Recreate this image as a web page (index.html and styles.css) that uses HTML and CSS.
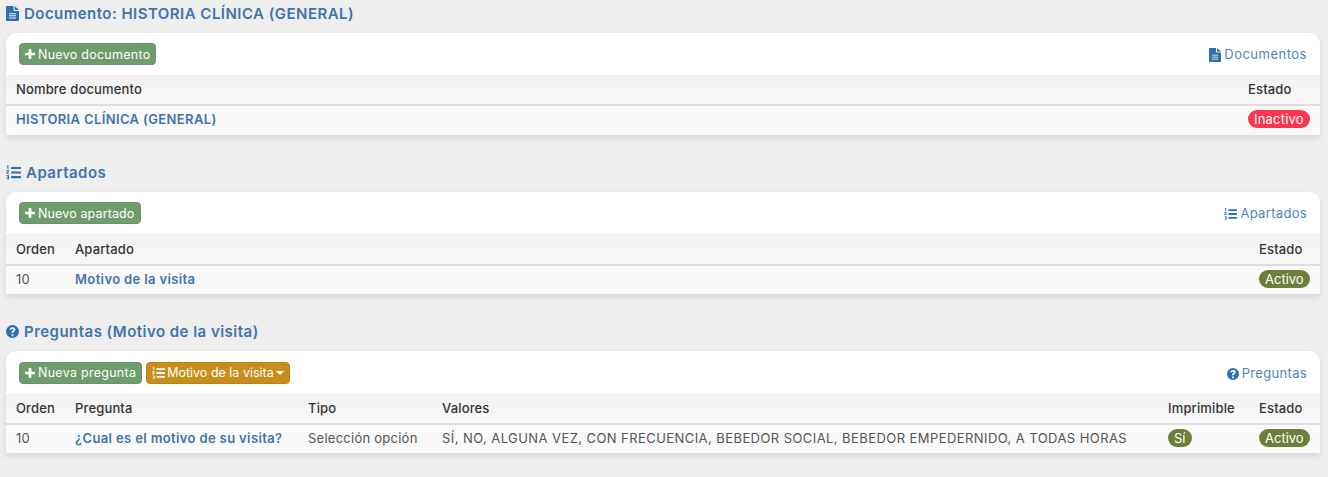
FILE: index.html
```html
<!DOCTYPE html>
<html lang="es">
<head>
  <meta charset="UTF-8">
  <meta name="viewport" content="width=device-width, initial-scale=1.0" />
  <title>Documento</title>
  <link rel="stylesheet" href="styles.css">
</head>
<body>
  <svg class="sprites" width="0" height="0">
    <symbol id="i-doc" viewBox="0 0 12 14" preserveAspectRatio="none">
      <path fill-rule="evenodd" d="M0 .8C0 .4.3 0 .8 0H7v3.800c0 .5.3.8.7.8H12v8.600c0 .4-.3.8-.8.8H.8c-.5 0-.8-.4-.8-.8zM2.800 6.700v.9h6.400v-.9zm0 2v.9h6.400v-.9zm0 2v.9h6.400v-.9z"/>
      <path d="M8 0l4 3.700H8z"/>
    </symbol>
    <symbol id="i-list" viewBox="0 0 16 15">
      <path d="M5.500 1.500H16v2.200H5.500zM5.500 6.400H16v2.200H5.500zM5.500 11.300H16v2.200H5.500z"/>
      <path d="M1 0h1.600v3.800H1.500V1H1zM.3 5.200h3v1L1.700 7.900h1.600v.9h-3v-.9L2 6.100H.3zM.3 10.500h3v4.300h-3v-.8h1.900v-.9H1v-.8h1.200v-.9H.3z"/>
    </symbol>
    <symbol id="i-help" viewBox="0 0 14 14">
      <path fill-rule="evenodd" d="M7 0a7 7 0 1 1 0 14A7 7 0 0 1 7 0zM6 10v2h2v-2zM7 2.400c-1.700 0-2.800.9-3.100 2.300l1.700.6c.2-.7.600-1.100 1.300-1.100.7 0 1.100.3 1.100.8 0 .5-.4.8-1 1.200-.8.5-1.200 1-1.200 1.900v.4h2v-.3c0-.4.2-.6.8-1 .9-.6 1.500-1.300 1.500-2.300 0-1.500-1.200-2.500-2.900-2.500z"/>
    </symbol>
    <symbol id="i-plus" viewBox="0 0 11 11">
      <path d="M4 .8C4 .4 4.300 0 4.700 0h1.600c.4 0 .7.400.7.800V4h3.200c.4 0 .8.300.8.700v1.600c0 .4-.4.700-.8.700H7v3.200c0 .4-.3.800-.7.800H4.700c-.4 0-.7-.4-.7-.8V7H.8C.4 7 0 6.700 0 6.300V4.700C0 4.300.4 4 .8 4H4z"/>
    </symbol>
  </svg>

  <section class="bloque">
    <h2 class="titulo"><svg class="ico ico-doc"><use href="#i-doc"/></svg>Documento: HISTORIA CLÍNICA (GENERAL)</h2>
    <div class="tarjeta">
      <div class="barra">
        <div class="acciones">
          <a class="btn btn-verde"><svg class="ico-plus"><use href="#i-plus"/></svg>Nuevo documento</a>
        </div>
        <a class="enlace"><svg class="ico ico-doc"><use href="#i-doc"/></svg>Documentos</a>
      </div>
      <table>
        <thead>
          <tr><th>Nombre documento</th><th class="col-estado-ancho">Estado</th></tr>
        </thead>
        <tbody>
          <tr>
            <td><a class="vinculo">HISTORIA CLÍNICA (GENERAL)</a></td>
            <td class="col-estado-ancho"><span class="pill pill-rojo">Inactivo</span></td>
          </tr>
        </tbody>
      </table>
    </div>
  </section>

  <section class="bloque">
    <h2 class="titulo"><svg class="ico ico-list"><use href="#i-list"/></svg>Apartados</h2>
    <div class="tarjeta">
      <div class="barra">
        <div class="acciones">
          <a class="btn btn-verde btn-justo"><svg class="ico-plus"><use href="#i-plus"/></svg>Nuevo apartado</a>
        </div>
        <a class="enlace enlace-justo"><svg class="ico ico-list"><use href="#i-list"/></svg>Apartados</a>
      </div>
      <table class="cabecera-alta">
        <thead>
          <tr><th class="col-orden">Orden</th><th>Apartado</th><th class="col-estado">Estado</th></tr>
        </thead>
        <tbody>
          <tr>
            <td class="col-orden">10</td>
            <td><a class="vinculo">Motivo de la visita</a></td>
            <td class="col-estado"><span class="pill pill-oliva">Activo</span></td>
          </tr>
        </tbody>
      </table>
    </div>
  </section>

  <section class="bloque">
    <h2 class="titulo"><svg class="ico ico-help"><use href="#i-help"/></svg>Preguntas (Motivo de la visita)</h2>
    <div class="tarjeta tarjeta-preguntas">
      <div class="barra">
        <div class="acciones">
          <a class="btn btn-verde"><svg class="ico-plus"><use href="#i-plus"/></svg>Nueva pregunta</a>
          <a class="btn btn-ocre"><svg class="ico ico-list"><use href="#i-list"/></svg>Motivo de la visita<span class="caret"></span></a>
        </div>
        <a class="enlace enlace-justo"><svg class="ico ico-help"><use href="#i-help"/></svg>Preguntas</a>
      </div>
      <table>
        <thead>
          <tr>
            <th class="col-orden">Orden</th>
            <th class="col-pregunta">Pregunta</th>
            <th class="col-tipo">Tipo</th>
            <th>Valores</th>
            <th class="col-imprimible">Imprimible</th>
            <th class="col-estado">Estado</th>
          </tr>
        </thead>
        <tbody>
          <tr>
            <td class="col-orden">10</td>
            <td class="col-pregunta"><a class="vinculo">¿Cual es el motivo de su visita?</a></td>
            <td class="col-tipo">Selección opción</td>
            <td class="valores">SÍ, NO, ALGUNA VEZ, CON FRECUENCIA, BEBEDOR SOCIAL, BEBEDOR EMPEDERNIDO, A TODAS HORAS</td>
            <td class="col-imprimible"><span class="pill pill-oliva">Sí</span></td>
            <td class="col-estado"><span class="pill pill-oliva">Activo</span></td>
          </tr>
        </tbody>
      </table>
    </div>
  </section>
</body>
</html>
```

FILE: styles.css
```css
* {
  margin: 0;
  padding: 0;
  box-sizing: border-box;
}

body {
  font-family: "Inter", "Open Sans", sans-serif;
  font-size: 13px;
  background-color: #eeeeee;
  color: #555555;
  padding: 0 8px 0 6px;
  overflow: hidden;
}

.sprites {
  position: absolute;
}

.bloque {
  height: 159px;
}

.titulo {
  height: 33px;
  padding-top: 5px;
  font-size: 15px;
  line-height: 18px;
  font-weight: 600;
  color: #3f74ab;
  letter-spacing: 0.47px;
  white-space: nowrap;
}

.ico {
  fill: #2f6fae;
  vertical-align: -2px;
  margin-right: 5px;
}

.ico-doc { width: 13px; height: 15px; }
.ico-list { width: 15px; height: 15px; }
.ico-help { width: 13px; height: 13px; vertical-align: -1px; }

.tarjeta {
  background-color: white;
  border-radius: 10px 10px 0 0;
  box-shadow: 0 3px 6px rgba(0,0,0,0.1);
  height: 102px;
}

.barra {
  height: 42px;
  display: flex;
  justify-content: space-between;
  align-items: center;
  padding: 0 13px;
}

.tarjeta-preguntas .barra {
  height: 43px;
}

.acciones {
  display: flex;
  gap: 4px;
}

.btn {
  display: flex;
  align-items: center;
  height: 22px;
  padding: 0 5px;
  border-radius: 4px;
  border: 1px solid #6a9468;
  background-color: #6f9c6d;
  color: white;
  font-size: 12.500px;
  letter-spacing: 0.27px;
  white-space: nowrap;
}

.btn-justo {
  letter-spacing: 0.13px;
}

.btn-ocre {
  background-color: #c68e1c;
  border-color: #b98414;
  letter-spacing: 0;
}

.btn .ico {
  fill: white;
  width: 13px;
  height: 12px;
  margin-right: 2px;
  vertical-align: 0;
}

.ico-plus {
  fill: white;
  width: 10px;
  height: 10px;
  margin-right: 3px;
}

.caret {
  width: 0;
  height: 0;
  margin-left: 2px;
  border-top: 4px solid white;
  border-left: 4px solid transparent;
  border-right: 4px solid transparent;
}

.enlace {
  color: #4d86bb;
  font-size: 13px;
  letter-spacing: 0.5px;
  white-space: nowrap;
}

.enlace-justo {
  letter-spacing: 0.32px;
}

.enlace .ico {
  margin-right: 3px;
  width: 12px;
  height: 14px;
  vertical-align: -3px;
}

.enlace .ico-list {
  width: 13px;
  height: 12px;
  vertical-align: -2px;
}

.enlace .ico-help {
  height: 12px;
  vertical-align: -2px;
}

table {
  width: 100%;
  border-collapse: collapse;
  table-layout: fixed;
}

th {
  height: 30px;
  padding: 0 10px 1px;
  text-align: left;
  font-weight: 500;
  letter-spacing: 0.15px;
  color: #333333;
  background-color: #f3f3f3;
  background-image: linear-gradient(#f2f2f2, #f8f8f8);
  border-bottom: 2px solid #dddddd;
}

.cabecera-alta th {
  height: 31px;
}

td {
  height: 30px;
  padding: 0 10px 3px;
  background-color: #f9f9f9;
  letter-spacing: 0.25px;
  white-space: nowrap;
}

.cabecera-alta td,
.tarjeta-preguntas td {
  height: 29px;
}

.col-orden { width: 59px; }
.col-pregunta { width: 233px; }
.col-tipo { width: 134px; }
.col-imprimible { width: 91px; }
.col-estado { width: 71px; }
.col-estado-ancho { width: 82px; }

.valores {
  letter-spacing: 0.43px;
}

.vinculo {
  color: #3f74ab;
  font-weight: 600;
  letter-spacing: 0.37px;
}

.pill {
  display: inline-block;
  padding: 0 6px;
  height: 18px;
  line-height: 18px;
  border-radius: 9px;
  color: white;
  font-size: 13px;
  letter-spacing: 0.2px;
  vertical-align: middle;
}

.pill-rojo {
  background-color: #f9364c;
}

.pill-oliva {
  background-color: #6e7e3a;
  letter-spacing: 0;
}
```
